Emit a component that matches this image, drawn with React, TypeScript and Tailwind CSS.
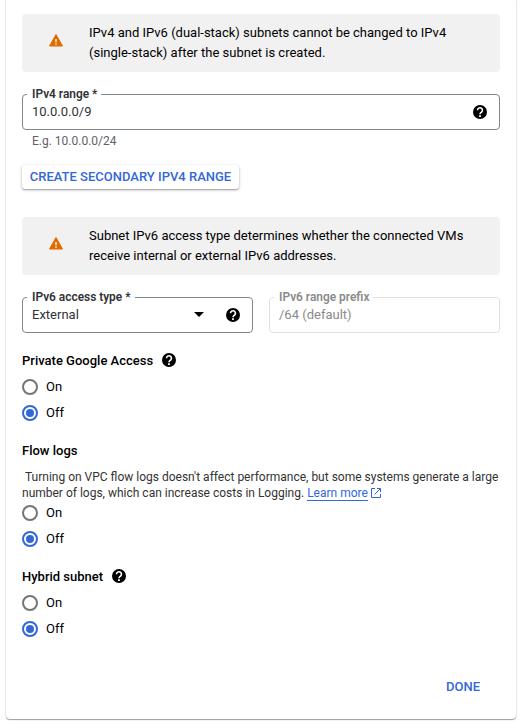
import type { ReactNode } from "react";

function HelpIcon() {
  return (
    <svg viewBox="2 2 20 20" className="size-[14px] shrink-0">
      <circle cx="12" cy="12" r="10" />
      <path d="M8.500 9.500a3.500 3.500 0 1 1 5.800 2.600c-1.300 1.100-2.300 1.500-2.300 3.100" fill="none" stroke="#fff" strokeWidth="2.300" />
      <path d="M10.700 16.500h2.600V19h-2.600z" fill="#fff" />
    </svg>
  );
}

function Alert({ children }: { children: ReactNode }) {
  return (
    <div className="flex h-[58px] items-center rounded bg-[#f1f1f1] pr-4">
      <div className="flex w-[67px] shrink-0 justify-center pb-[5px] pl-px">
        <svg viewBox="0 0 14 13" className="h-[13px] w-[14px]">
          <path d="M7 .5 13.500 12H.5z" fill="#e06c00" stroke="#e06c00" strokeLinejoin="round" />
          <path d="M6.300 5h1.400v3.300H6.300zM6.300 9.300h1.400v1.400H6.300z" fill="#f1f1f1" />
        </svg>
      </div>
      <p className="text-[13px] leading-5">{children}</p>
    </div>
  );
}

function Field({ label, disabled, children }: { label: string; disabled?: boolean; children: ReactNode }) {
  return (
    <fieldset
      className={
        disabled
          ? "h-9 min-w-0 flex-1 rounded border border-[#dfe1e3] text-[#8a8a8a]"
          : "h-9 min-w-0 flex-1 rounded border border-[#80868b] text-[#303236]"
      }
    >
      <legend className="ml-1 h-px pr-[4px] pl-[5px] text-[11.900px] leading-[0px] font-semibold whitespace-nowrap">{label}</legend>
      <div className="flex h-[33px] items-center pr-3 pl-[9px] text-[13px]">{children}</div>
    </fieldset>
  );
}

function Radio({ label, checked }: { label: string; checked?: boolean }) {
  return (
    <div className="flex h-[26px] items-center gap-2 text-[13px]">
      <span
        className={
          checked
            ? "flex size-4 items-center justify-center rounded-full border-2 border-[#3367d6]"
            : "size-4 rounded-full border-2 border-[#757575]"
        }
      >
        {checked && <span className="size-2 rounded-full bg-[#3367d6]" />}
      </span>
      <span>{label}</span>
    </div>
  );
}

function OnOff() {
  return (
    <div>
      <Radio label="On" />
      <Radio label="Off" checked />
    </div>
  );
}

function Heading({ children, help }: { children: string; help?: boolean }) {
  return (
    <h3 className="flex h-5 items-center gap-[8.400px] text-[13px] font-medium">
      <span className="pt-0.5">{children}</span>
      {help && <HelpIcon />}
    </h3>
  );
}

export default function App() {
  return (
    <div className="h-[726px] overflow-hidden bg-white pr-[4px] pl-[6px] font-[Roboto,sans-serif] text-black">
      <div className="flex h-[719px] flex-col rounded-b px-4 pt-[14px] shadow-[0_1px_1px_rgba(0,0,0,0.35),0_0_2px_rgba(0,0,0,0.2)]">
        <Alert>
          IPv4 and IPv6 (dual-stack) subnets cannot be changed to IPv4
          <br />
          (single-stack) after the subnet is created.
        </Alert>
        <div className="mt-[22px] flex">
          <Field label="IPv4 range *">
            <span className="flex-1">10.0.0.0/9</span>
            <HelpIcon />
          </Field>
        </div>
        <p className="mt-[3px] pl-[10px] text-xs leading-4 text-[#5f6368]">E.g. 10.0.0.0/24</p>
        <button className="mt-4 flex h-6 w-[217px] shrink-0 items-center justify-center rounded-[3px] text-[13px] font-medium whitespace-nowrap text-[#3367d6] shadow-[0_1px_3px_rgba(0,0,0,0.3),0_1px_1px_rgba(0,0,0,0.15)]">
          CREATE SECONDARY IPV4 RANGE
        </button>
        <div className="mt-7">
          <Alert>
            Subnet IPv6 access type determines whether the connected VMs
            <br />
            receive internal or external IPv6 addresses.
          </Alert>
        </div>
        <div className="mt-[22px] flex gap-4">
          <Field label="IPv6 access type *">
            <span className="flex-1">External</span>
            <svg viewBox="0 0 10 5" className="mr-[22px] h-[5px] w-[10px]">
              <path d="M0 0h10L5 5z" />
            </svg>
            <HelpIcon />
          </Field>
          <Field label="IPv6 range prefix" disabled>
            /64 (default)
          </Field>
        </div>

        <div className="mt-[17px] flex flex-col gap-1">
          <Heading help>Private Google Access</Heading>
          <OnOff />
        </div>

        <div className="mt-[14px]">
          <Heading>Flow logs</Heading>
          <p className="mt-[9px] text-xs leading-4 whitespace-nowrap text-[#333]">
            &nbsp;Turning on VPC flow logs doesn't affect performance, but some systems generate a large
            <br />
            number of logs, which can increase costs in Logging.{" "}
            <a className="inline-flex h-4 items-center text-[#3367d6]">
              <span className="h-4 border-b border-[#3367d6]">Learn more</span>
              <svg viewBox="0 0 10 10" className="ml-[3px] size-[10px] fill-none stroke-[#3367d6]">
                <path d="M4 .5H.5v9h9V6M6 .5h3.500V4M9.500.5 3.500 6.500" />
              </svg>
            </a>
          </p>
          <div className="-mt-px">
            <OnOff />
          </div>
        </div>

        <div className="mt-[14px] flex flex-col gap-1">
          <Heading help>Hybrid subnet</Heading>
          <OnOff />
        </div>

        <button className="mt-[35px] mr-5 self-end text-[13px] leading-5 font-medium text-[#3367d6]">DONE</button>
      </div>
    </div>
  );
}
